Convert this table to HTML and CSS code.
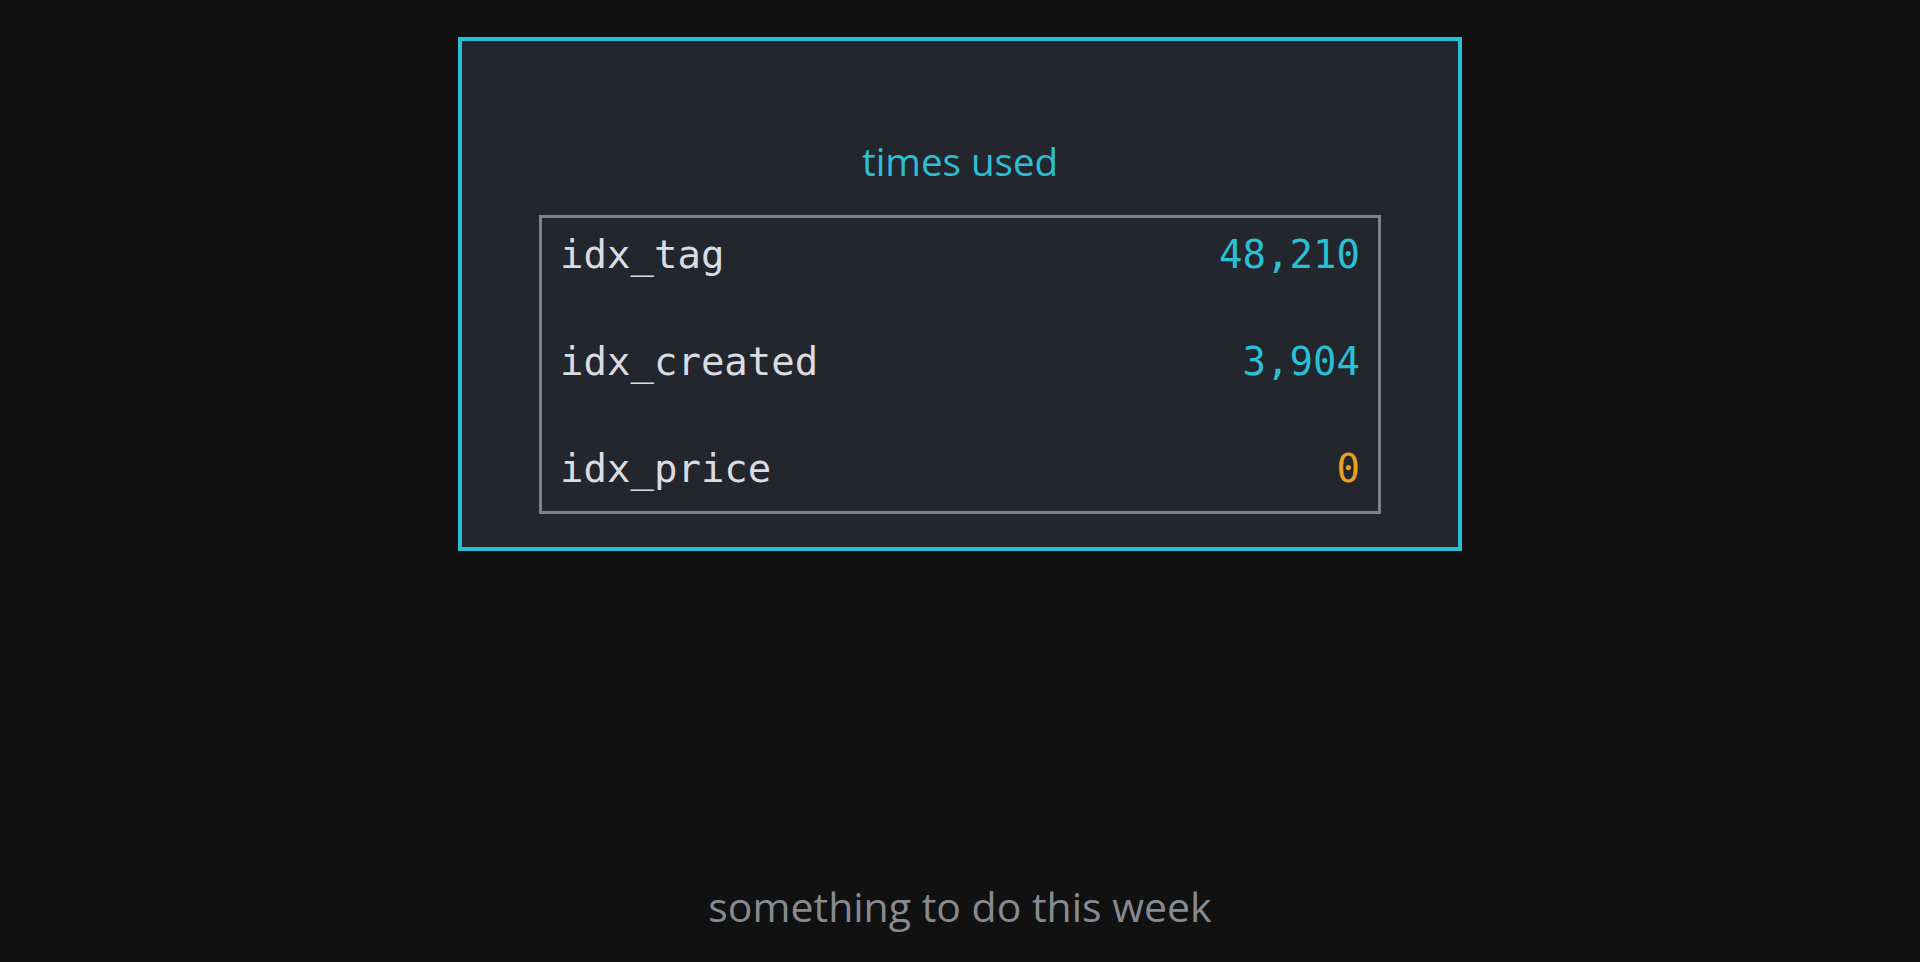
FILE: index.html
```html
<!DOCTYPE html>
<html lang="en">
<head>
    <meta charset="UTF-8">
    <meta name="viewport" content="width=device-width, initial-scale=1.0">
    <title>Index usage</title>
    <link rel="stylesheet" href="styles.css">
</head>
<body>
    <div class="slide">
        <div class="usage-card">
            <h2 class="usage-title">times used</h2>
            <div class="usage-table">
                <div class="usage-row">
                    <span class="index-name">idx_tag</span>
                    <span class="index-count">48,210</span>
                </div>
                <div class="usage-row">
                    <span class="index-name">idx_created</span>
                    <span class="index-count">3,904</span>
                </div>
                <div class="usage-row">
                    <span class="index-name">idx_price</span>
                    <span class="index-count unused">0</span>
                </div>
            </div>
        </div>

        <p class="caption">something to do this week</p>
    </div>
</body>
</html>
```

FILE: styles.css
```css
body {
    margin: 0;
    padding: 0;
    background-color: #111111;
    font-family: "Open Sans", "Noto Sans", sans-serif;
}

/* Page layout */
.slide {
    height: 962px;
    display: flex;
    flex-direction: column;
    align-items: center;
    padding-top: 37px;
    box-sizing: border-box;
}

/* Outer card with the cyan frame */
.usage-card {
    width: 1004px;
    height: 514px;
    box-sizing: border-box;
    border: 4px solid #29c0d6;
    background-color: #23262c;
    display: flex;
    flex-direction: column;
    align-items: center;
}

.usage-title {
    margin: 0;
    padding-top: 95px;
    height: 174px;
    box-sizing: border-box;
    font-size: 38.5px;
    font-weight: 400;
    line-height: 50px;
    color: #29c0d6;
}

/* Inner table */
.usage-table {
    width: 842px;
    box-sizing: border-box;
    border: 3px solid #7f8288;
    padding: 15px 18px 20px 18px;
    display: flex;
    flex-direction: column;
    gap: 63px;
}

.usage-row {
    display: flex;
    justify-content: space-between;
    align-items: baseline;
    font-family: "DejaVu Sans Mono", monospace;
    font-size: 39px;
    line-height: 44px;
}

.index-name {
    color: #d9dce1;
}

.index-count {
    color: #29c0d6;
}

.index-count.unused {
    color: #e9a31b;
}

/* Footer caption */
.caption {
    margin: 0;
    margin-top: 330px;
    font-size: 41px;
    line-height: 50px;
    color: #878a91;
}
```
